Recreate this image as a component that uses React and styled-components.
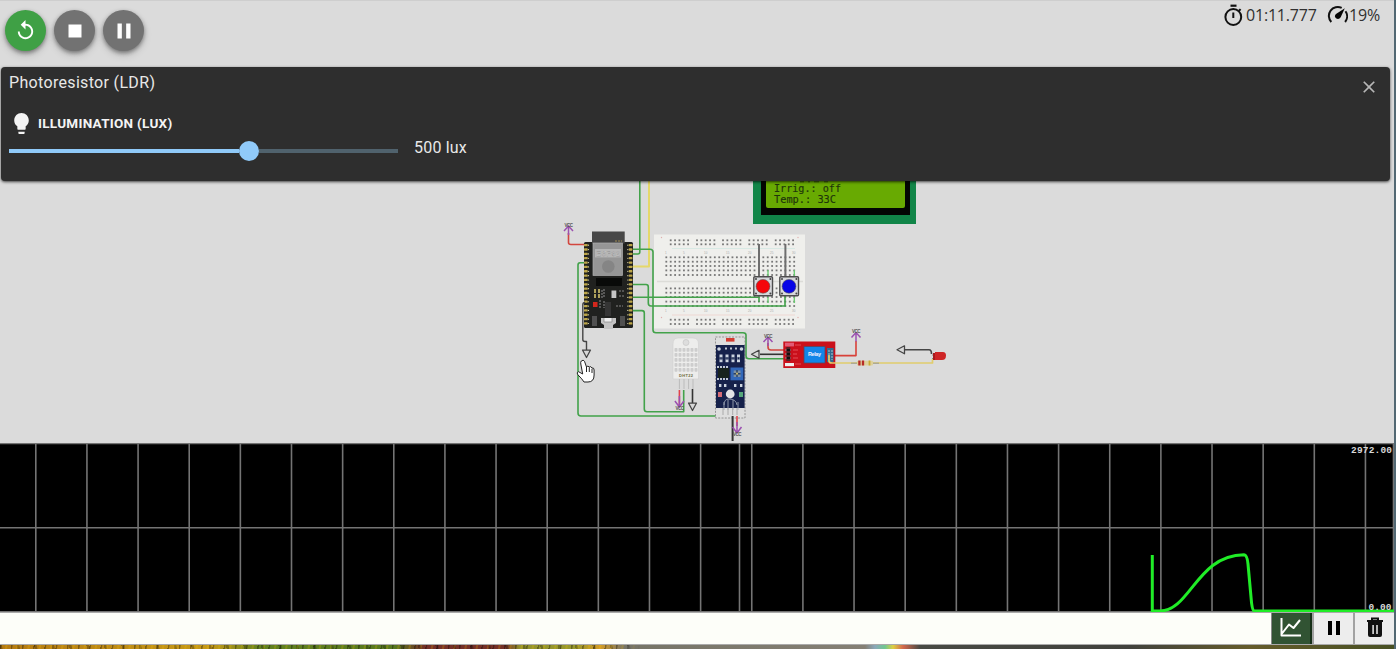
import React from 'react';
import styled, { createGlobalStyle } from 'styled-components';
import { MdReplay, MdStop, MdPause, MdLightbulb, MdClose } from 'react-icons/md';

const GlobalStyle = createGlobalStyle`
  * { box-sizing: border-box; }
  body { margin: 0; background: #dbdbdb; font-family: Roboto, sans-serif; overflow: hidden; }
  button { font: inherit; padding: 0; border: 0; }
  svg { display: block; flex: none; }
`;

const Window = styled.div`
  display: grid;
  grid-template-rows: 67px 114px 262px 169px 33px 4px;
  width: 1396px;
  height: 649px;
  background: #dbdbdb;
  border-right: 2px solid #526873;
  overflow: hidden;
`;

const Toolbar = styled.header`
  display: flex;
  justify-content: space-between;
  align-items: flex-start;
  padding: 9px 13px 0 5px;
  border-top: 1px solid #cecece;
`;

const Actions = styled.div`
  display: flex;
  gap: 8px;
`;

const RoundButton = styled.button`
  display: grid;
  place-items: center;
  width: 41px;
  height: 41px;
  border-radius: 50%;
  color: #fff;
  background: ${(p) => (p.$primary ? '#3fa045' : '#727272')};
  box-shadow: 0 2px 4px rgba(0, 0, 0, 0.4), 0 4px 9px rgba(0, 0, 0, 0.14);
`;

const Stats = styled.div`
  display: flex;
  align-items: center;
  height: 22px;
  margin-top: -6px;
  color: #303030;
  font: 16px/22px 'Open Sans', sans-serif;
`;

const StatText = styled.span`
  width: ${(p) => p.$width}px;
  margin-left: 1px;
  white-space: nowrap;
  letter-spacing: ${(p) => p.$spacing || 0}px;
`;

const Panel = styled.section`
  display: flex;
  justify-content: space-between;
  position: relative;
  margin: 0 4px 0 1px;
  padding: 6px 11px 0 8px;
  border-radius: 4px;
  background: #2e2e2e;
  color: #e8e8e8;
  box-shadow: 0 1px 3px rgba(0, 0, 0, 0.7);
`;

const PanelTitle = styled.h2`
  margin: 0;
  font: 400 16px/20px Roboto, sans-serif;
  letter-spacing: 0.33px;
`;

const ControlLabel = styled.div`
  display: flex;
  align-items: center;
  gap: 4px;
  height: 24px;
  margin-top: 18px;
  color: #f4f4f4;
  font: 700 13.5px/24px Roboto, sans-serif;
  letter-spacing: 0.28px;
`;

const ControlRow = styled.div`
  display: flex;
  align-items: center;
  gap: 16px;
  height: 24px;
  font-size: 16px;
  letter-spacing: 0.2px;
`;

const Slider = styled.div`
  display: flex;
  align-items: center;
  width: 389px;
  height: 20px;
  padding-top: 7px;
`;

const Track = styled.div`
  width: ${(p) => p.$width}px;
  height: 4px;
  background: ${(p) => (p.$filled ? '#90caf9' : '#50626d')};
`;

const Thumb = styled.div`
  width: 20px;
  height: 20px;
  border-radius: 50%;
  background: #90caf9;
`;

const CloseButton = styled.button`
  width: 20px;
  height: 20px;
  margin-top: 4px;
  background: transparent;
  color: #b7b7b7;
`;

const Footer = styled.footer`
  display: flex;
  justify-content: flex-end;
  background: #fdfef9;
  border-top: 1px solid #aaa;
  border-bottom: 1px solid #aaa;
`;

const FooterButton = styled.button`
  display: grid;
  place-items: center;
  width: ${(p) => p.$width}px;
  height: 31px;
  padding-bottom: 2px;
  background: ${(p) => (p.$active ? '#315333' : '#ededed')};
  border-left: ${(p) => (p.$active ? 1 : 2)}px solid ${(p) => (p.$active ? '#888' : '#a2a2a2')};
  border-right: ${(p) => (p.$active ? '2px solid #173018' : '0')};
`;

const Wallpaper = styled.div`
  background:
    linear-gradient(90deg, transparent 620px, #777568 640px, #858075 865px, #8ba8ba 875px, #70c890 885px, #ddcf42 893px, #d4694d 903px, #484a44 920px, #41423d 1130px, #655c2b 1250px, #485023 1394px),
    repeating-linear-gradient(101deg, #0005 0 1px, transparent 2px 5px, #ffc80030 6px 7px, transparent 8px 11px),
    repeating-linear-gradient(77deg, #0004 0 2px, transparent 3px 17px),
    linear-gradient(90deg, #b47a13 0, #c69a18 210px, #628220 260px, #56771f 395px, #743027 425px, #743027 505px, #92922c 520px, #98992e 575px, #d29b28 600px, #777568 625px);
`;

const range = (n) => Array.from({ length: n }, (_, i) => i);

function Wire({ d, color = '#42a24a', width = 1.6 }) {
  return <path d={d} fill="none" stroke={color} strokeWidth={width} strokeLinejoin="round" />;
}

function Power({ x, y, down = false, lx = 0 }) {
  return (
    <g transform={`translate(${x} ${y})`}>
      <path d={down ? 'M0 -7V4M-4.5 -2L0 4L4.5 -2' : 'M0 9V0M-4.5 5L0 0L4.5 5'} fill="none" stroke="#9b50b0" strokeWidth="1.5" />
      <text x={lx - 4} y={down ? 7 : 0.5} fontSize="4.5" fontWeight="bold" textLength="8.5" fill="#555" fontFamily="Liberation Sans">VCC</text>
    </g>
  );
}

function Lcd() {
  return (
    <g>
      <rect x="753" y="175" width="163" height="49" fill="#118548" />
      <rect x="761" y="175" width="149" height="40" fill="#030603" />
      <rect x="766" y="175" width="139" height="33" rx="2" fill="#68aa02" />
      <g fill="#20350b" stroke="#20350b" strokeWidth=".15" fontFamily="DejaVu Sans Mono" fontSize="10.5">
        <path d="M800 181.8h4M808 181.8h2M814 181.8h5M824 181.8h4" stroke="#355309" strokeWidth="1" />
        <text x="774" y="192.4" textLength="67" lengthAdjust="spacingAndGlyphs">Irrig.: off</text>
        <text x="774" y="203" textLength="62" lengthAdjust="spacingAndGlyphs">Temp.: 33C</text>
      </g>
    </g>
  );
}

function Breadboard() {
  const railX = [670.7, 697, 723, 749.3, 775.7];
  return (
    <g>
      <rect x="654" y="234.5" width="151" height="94" fill="#efefec" />
      <path d="M657 281.5H803" stroke="#dcdcd8" strokeWidth="1.7" />
      <path d="M672 248.5H795" stroke="#cfe7e1" strokeWidth=".7" />
      <path d="M672 315H795" stroke="#efcec8" strokeWidth=".7" />
      <g fill="#777">
        {[240.3, 244.3, 319.7, 324].map((y) => railX.map((x) => range(5).map((i) => (
          <rect key={`${y}-${x}-${i}`} x={x + i * 4.35 - 0.9} y={y - 0.9} width="1.8" height="1.8" />
        ))))}
        {[257.3, 261.7, 266, 270.4, 275, 288.4, 292.7, 297, 301.6, 306].map((y) => range(30).map((i) => (
          <rect key={`${y}-${i}`} x={666.3 + i * 4.41 - 0.9} y={y - 0.9} width="1.8" height="1.8" />
        )))}
      </g>
      <g fill="#aaa" fontSize="3" fontFamily="Liberation Sans">
        {[1, 5, 10, 15, 20, 25, 30].map((n, i) => (
          <React.Fragment key={n}>
            <text x={[665, 683, 704, 726, 748, 770, 792][i]} y="253.5">{n}</text>
            <text x={[665, 683, 704, 726, 748, 770, 792][i]} y="312">{n}</text>
          </React.Fragment>
        ))}
      </g>
      <g fill="#dfafaf">
        <circle cx="661.5" cy="237.5" r=".7" /><circle cx="798" cy="237.5" r=".7" />
        <circle cx="661.5" cy="317.5" r=".7" /><circle cx="798" cy="317.5" r=".7" />
      </g>
    </g>
  );
}

function PushButton({ x, color }) {
  return (
    <g transform={`translate(${x} 276)`}>
      <rect x=".8" y=".8" width="18.7" height="19" rx="1" fill="#d8d9dc" stroke="#4e4e4e" strokeWidth="1.4" />
      <g fill="#444"><circle cx="3" cy="3" r="1" /><circle cx="17.4" cy="3" r="1" /><circle cx="3" cy="17.6" r="1" /><circle cx="17.4" cy="17.6" r="1" /></g>
      <circle cx="10" cy="10.3" r="6.9" fill={color} stroke="#555" strokeWidth=".6" />
    </g>
  );
}

function Esp32() {
  return (
    <g>
      <rect x="584" y="242" width="49" height="86" rx="1.5" fill="#20211f" />
      {range(19).map((i) => (
        <g key={i} fill="#bda649">
          <rect x="584" y={244 + i * 4.35} width="3.7" height="2.3" rx=".6" />
          <rect x="628.7" y={244 + i * 4.35} width="3.7" height="2.3" rx=".6" />
          <circle cx="588.5" cy={245.2 + i * 4.35} r=".6" fill="#e5ddb0" />
          <circle cx="627.8" cy={245.2 + i * 4.35} r=".6" fill="#e5ddb0" />
        </g>
      ))}
      <rect x="592" y="231.5" width="32.7" height="12" fill="#474747" />
      <rect x="593" y="243" width="29.5" height="32.5" fill="#969696" stroke="#b0b0b0" strokeWidth=".7" />
      <path d="M615 241H622" stroke="#9d8b54" strokeDasharray="2 1" />
      <rect x="595" y="249" width="26" height="8.4" fill="#b6b6b6" />
      <text x="596" y="256" textLength="24" fontSize="7.2" fontFamily="Liberation Sans" fill="#e9e9e9" stroke="#777" strokeWidth=".25">ESP32</text>
      <circle cx="608.3" cy="266.5" r="6.3" fill="#858585" />
      <rect x="596" y="278" width="26" height="8" fill="#090a09" />
      <rect x="611.5" y="290.5" width="4.8" height="7.5" fill="#c6c6c6" />
      <g fill="#afa25c">
        <rect x="594" y="289" width="2" height="4" /><rect x="598" y="289" width="2" height="4" />
        <rect x="594" y="294" width="2" height="4" /><rect x="598" y="294" width="2" height="4" />
      </g>
      <path d="M602 290v8M604 289v9M619 291h6M619 296h6M600 300v8M604 301v7M616 306h7" stroke="#858585" strokeWidth="1.1" strokeDasharray="2 1" />
      <rect x="593" y="302" width="4.5" height="5" fill="#d3271d" />
      <rect x="605" y="302" width="6" height="14" fill="#353535" />
      <rect x="592" y="316" width="5" height="10" fill="#505050" />
      <rect x="620" y="316" width="5" height="10" fill="#505050" />
      <path d="M601 318H616V323L613 325V329H604V325L601 323Z" fill="#c4c4c4" />
      <path d="M604 318v4h8v-4" fill="#ededed" stroke="#888" strokeWidth=".7" />
    </g>
  );
}

function TemperatureSensor() {
  return (
    <g>
      <path d="M673 379V344Q673 338 678 338H693Q698.5 338 698.5 344V379Z" fill="#ededec" stroke="#d2d2d2" strokeWidth=".7" />
      <circle cx="686" cy="342.5" r="3" fill="#ddd" stroke="#bbb" strokeWidth=".5" />
      {[348, 353, 358, 363, 368].map((y) => range(6).map((i) => (
        <rect key={`${y}-${i}`} x={674.5 + i * 4} y={y} width="3" height="3.7" rx=".8" fill="#cdcdcd" />
      )))}
      <text x="679" y="377" fontSize="4" textLength="14" fill="#6c6c40" fontWeight="bold" fontFamily="Liberation Sans">DHT22</text>
      <path d="M679.4 379v10M684 379v10M688.6 379v10M693 379v10" stroke="#bbb" strokeWidth="1" />
    </g>
  );
}

function LightSensor() {
  return (
    <g>
      <rect x="715.5" y="337" width="29.5" height="81" fill="#dedede" stroke="#777" strokeWidth=".7" strokeDasharray="2 1.3" />
      <rect x="726" y="338" width="8.5" height="3.6" fill="#d33c31" />
      <rect x="716" y="345" width="28.6" height="63" fill="#16214b" />
      <g fill="#ccd4df">
        <circle cx="719" cy="349" r="1.8" /><circle cx="741.5" cy="349" r="1.8" />
        {[719.5, 725.5, 731.5, 737].map((x) => <React.Fragment key={x}><rect x={x} y="354.5" width="3" height="2.7" /><rect x={x} y="359.5" width="3" height="2.7" /><path d={`M${x + 0.5} 357v3M${x + 2.5} 357v3`} stroke="#8f9bb0" strokeWidth=".6" /></React.Fragment>)}
        {[719, 724, 734, 740].map((x) => <rect key={x} x={x} y="384" width="2.4" height="3" />)}
      </g>
      <path d="M725 348.5h3M730 348.5h3M735 348.5h3M717 367h12M717 379h12" stroke="#bec6d1" strokeWidth="2" strokeDasharray="2 1" />
      <rect x="718" y="368" width="11" height="10" fill="#18231e" />
      <rect x="730.5" y="367.5" width="12.8" height="12.8" fill="#3267b9" />
      <rect x="733.7" y="370.5" width="6.8" height="6.5" fill="#7c91a5" />
      <path d="M737 370v7M733.5 373.7h7" stroke="#293f60" strokeWidth="1.4" />
      <circle cx="737" cy="373.7" r="1.1" fill="#c9ba70" />
      <circle cx="730.2" cy="394" r="4.4" fill="#e3e3e5" />
      <path d="M718 392h4v5h-4" fill="#d56c76" /><path d="M739 392h4v5h-4" fill="#56a77b" />
      <path d="M724 405q0-6 5-6q7 0 8 6M728 400v10M733 400v10M724 402v8M738 402v8" fill="none" stroke="#9ba4b4" strokeWidth=".9" />
      <path d="M723 408v7M728 408v7M732.7 408v7M737 408v7" stroke="#aaa" />
    </g>
  );
}

function Relay() {
  return (
    <g>
      <rect x="783.3" y="341.5" width="52" height="26.5" fill="#ca101b" />
      <rect x="804" y="346.5" width="21" height="16.5" fill="#1285e8" stroke="#5b455e" strokeWidth=".8" />
      <text x="808" y="356.2" fontSize="5.5" textLength="13" fill="#f2f2ff" fontWeight="bold" fontFamily="Liberation Sans">Relay</text>
      <rect x="785" y="342.7" width="9" height="3.7" fill="#e25b75" />
      <rect x="785" y="363" width="9" height="3.2" fill="#eee" />
      <path d="M785 350h6M785 354h6M785 358h6" stroke="#8d7478" strokeWidth="1.4" />
      <path d="M788.3 347v14" stroke="#542127" strokeWidth="4" />
      <path d="M787 350h3M787 354h3M787 358h3" stroke="#111" strokeWidth="2" />
      <path d="M795 345h6M793 350h5M793 354h4M793 358h5M795 364h6" stroke="#e44d56" />
      <rect x="827" y="348" width="6.5" height="14" fill="#326b8f" />
      <path d="M829 350v10M832 350v10" stroke="#a6c8d3" strokeDasharray="2 1" />
    </g>
  );
}

function Arrow({ x, y, rotation = 0 }) {
  return <path transform={`translate(${x} ${y}) rotate(${rotation})`} d="M0 0L7.5-4V4Z" fill="#d8d8d8" stroke="#444" strokeWidth="1.25" strokeLinejoin="round" />;
}

function Circuit() {
  return (
    <svg width="1394" height="262" viewBox="0 181 1394 262">
      <Lcd />
      <Breadboard />
      <Wire d="M639.8 175V252Q639.8 254 637.8 254H631" />
      <Wire d="M649 175V266.5H632" color="#e5d86b" width={2} />
      <Wire d="M632 249.3H650Q653 249.3 653 252V330Q653 332.7 656 332.7H743Q746 332.7 746 335V356Q746 358.7 749 358.7H784" />
      <Wire d="M632 284.5H646Q648.3 284.5 648.3 287V303Q648.3 306 651 306H785V296" />
      <Wire d="M632 297.3H759V302" />
      <Wire d="M632 310.6H642Q644.3 310.6 644.3 313V409Q644.3 411.7 647 411.7H683.7V390" />
      <Wire d="M585 262.7H580Q578 262.7 578 265V413Q578 416 581 416H723V410" />
      <path d="M759 244V276M785.4 244V276" stroke="#6e6e6e" strokeWidth="2" />
      <path d="M768 270v6M794.3 270v6M768 297v6M794.3 297v6" stroke="#66cc6e" strokeWidth="1.3" />
      <PushButton x={753} color="#f5060b" />
      <PushButton x={779} color="#0705e7" />
      <Wire d="M568.5 233V242.5Q568.5 244.5 571 244.5H585" color="#d2463e" />
      <Power x={568.5} y={226} />
      <Esp32 />
      <Wire d="M585 302.5Q582.8 302.5 582.8 305V339.5Q582.8 341.5 585 341.5H586.5V351" color="#454545" width={1.4} />
      <Arrow x={586.5} y={357.5} rotation={-90} />
      <TemperatureSensor />
      <Wire d="M679.4 390V405" color="#e24149" />
      <Power x={679.4} y={403} down />
      <Wire d="M692.5 389V403" color="#333" />
      <Arrow x={692.5} y={410.5} rotation={-90} />
      <LightSensor />
      <Wire d="M732.6 416V441" color="#333" width={2} />
      <Wire d="M737 416V426" color="#e24149" />
      <Power x={737} y={429} down />
      <Wire d="M768 343V347Q768 350 771 350H784" color="#d2463e" />
      <Power x={768} y={337} />
      <Wire d="M784 354.3H760" color="#333" />
      <Arrow x={751.5} y={354.3} />
      <Wire d="M834 355.6H856V341" color="#d84139" />
      <Power x={856} y={332.5} />
      <Relay />
      <Wire d="M829 355V361Q829 363 832 363H932.5V359" color="#e1cd6c" width={1.7} />
      <path d="M851 363.2h28" stroke="#999" />
      <rect x="857" y="360.8" width="16" height="4.8" rx="1" fill="#ded19b" />
      <path d="M859.4 360.5v5M863 360.5v5" stroke="#b72b28" strokeWidth="2.3" />
      <path d="M869.5 360.5v5" stroke="#caaa34" strokeWidth="1.8" />
      <Arrow x={897} y={349.8} />
      <Wire d="M905 349.8H929Q931.5 349.8 931.5 354" color="#454545" />
      <path d="M932 355h5M932 358.5h5" stroke="#888" />
      <path d="M935 352H943Q946 352 946 355.5Q946 360 942 360H935Z" fill="#ce2526" />
      <path d="M934 353v7" stroke="#a61b1e" strokeWidth="2" />
      <g transform="translate(576 359)" stroke="#222" strokeWidth="1" fill="#fff" strokeLinejoin="round">
        <path d="M5.3 2Q7.3.2 8.5 2.3L10.5 8Q12 6 13.2 8Q15 6.8 16 9Q18.1 8.5 18.1 11V16Q18.1 23 12 23H8Q6.4 20.2 1.9 15.8Q0 13.5 2.6 12.7L6.7 15L4.8 5Q4.3 3 5.3 2Z" />
        <path d="M10.5 8v5M13.3 8.3v4.7M16 9.7V14" fill="none" />
      </g>
    </svg>
  );
}

function Plot() {
  return (
    <svg width="1394" height="169" viewBox="0 443 1394 169">
      <rect y="443" width="1394" height="169" fill="#000" />
      <g stroke="#747474" strokeWidth="1.6">
        {range(27).map((i) => <path key={i} d={`M${35.8 + i * 51.14} 443V612`} />)}
        <path d="M739.5 443V612" />
        <path d="M0 443.5H1394M0 527.8H1394M0 611.8H1394M1393.5 443V612" />
      </g>
      <path d="M1152.3 555V611H1160C1190 611 1197 555 1244 554.7Q1247.2 555 1248 564L1251 597Q1252 611 1254 611H1394" fill="none" stroke="#20ed27" strokeWidth="3" />
      <g fill="#d8d8d8" fontSize="9.5" fontWeight="bold" fontFamily="Liberation Mono">
        <text x="1351" y="453.3" textLength="41">2972.00</text>
        <text x="1368.5" y="610" textLength="23">0.00</text>
      </g>
    </svg>
  );
}

function StopwatchIcon() {
  return (
    <svg width="24" height="24" viewBox="0 0 24 24">
      <path d="M9.5 2.7H15.5" stroke="#111" strokeWidth="2.2" />
      <circle cx="12.3" cy="14" r="7.9" fill="none" stroke="#111" strokeWidth="2" />
      <path d="M12.3 9.5V15M18 7.7L19.6 6.1" stroke="#111" strokeWidth="2" />
    </svg>
  );
}

function GaugeIcon() {
  return (
    <svg width="22" height="20" viewBox="0 0 22 20">
      <path d="M5.3 17A8.9 8.9 0 0 1 15.7 2.9M19.5 6.3A8.9 8.9 0 0 1 19.1 17" fill="none" stroke="#111" strokeWidth="2" />
      <path d="M18.8 3.3L14.7 12.2Q12.9 15 10 13.3Q7.8 11 10 8.9Z" fill="#050505" />
    </svg>
  );
}

function ChartIcon() {
  return <svg width="22" height="21" viewBox="0 0 22 21"><path d="M1.5 1V18.5H21M2 16.5L9 7.5L13.5 11L20 3" fill="none" stroke="#fff" strokeWidth="2" strokeLinejoin="round" /></svg>;
}

function TrashIcon() {
  return <svg width="20" height="22" viewBox="0 0 20 22"><path d="M2 4H18M7 3V1.6H13V3" fill="none" stroke="#111" strokeWidth="2" /><path d="M3 5H17V18Q17 20 15 20H5Q3 20 3 18Z" fill="#111" /><path d="M8.1 8V17M12 8V17" stroke="#ededed" strokeWidth="1.5" /></svg>;
}

export default function App() {
  return (
    <>
      <GlobalStyle />
      <Window>
        <Toolbar>
          <Actions>
            <RoundButton $primary aria-label="Restart"><MdReplay size={23} /></RoundButton>
            <RoundButton aria-label="Stop"><MdStop size={26} /></RoundButton>
            <RoundButton aria-label="Pause"><MdPause size={26} /></RoundButton>
          </Actions>
          <Stats>
            <StopwatchIcon />
            <StatText $width={80} $spacing={-0.2}>01:11.777</StatText>
            <GaugeIcon />
            <StatText $width={32} $spacing={-0.2}>19%</StatText>
          </Stats>
        </Toolbar>
        <Panel>
          <div>
            <PanelTitle>Photoresistor (LDR)</PanelTitle>
            <ControlLabel><MdLightbulb size={25} />ILLUMINATION (LUX)</ControlLabel>
            <ControlRow>
              <Slider>
                <Track $filled $width={230} /><Thumb /><Track $width={139} />
              </Slider>
              <span>500 lux</span>
            </ControlRow>
          </div>
          <CloseButton aria-label="Close"><MdClose size={20} /></CloseButton>
        </Panel>
        <Circuit />
        <Plot />
        <Footer>
          <FooterButton $active $width={41} aria-label="Show chart"><ChartIcon /></FooterButton>
          <FooterButton $width={41} aria-label="Pause plot"><MdPause size={24} /></FooterButton>
          <FooterButton $width={41} aria-label="Clear plot"><TrashIcon /></FooterButton>
        </Footer>
        <Wallpaper />
      </Window>
    </>
  );
}
